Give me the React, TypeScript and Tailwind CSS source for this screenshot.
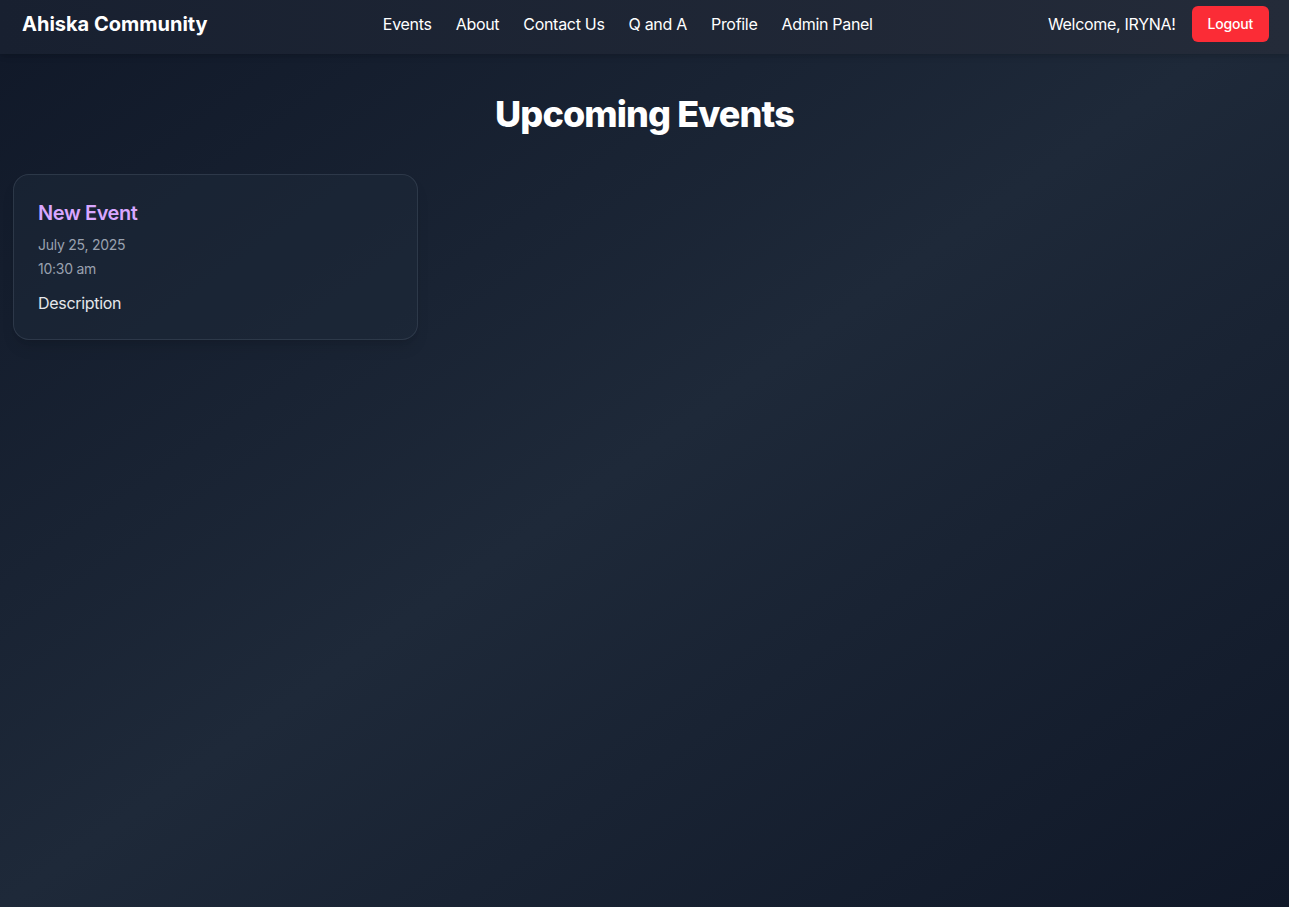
import React from "react";

export default function App() {
  const links = ["Events", "About", "Contact Us", "Q and A", "Profile", "Admin Panel"];
  return (
    <div
      className="min-h-screen w-full bg-linear-to-br from-[#101828] via-[#1e2939] to-[#101828] text-white"
      style={{ fontFamily: "Inter, 'Noto Sans', sans-serif" }}
    >
      <nav className="flex items-center justify-between bg-linear-to-r from-[#182030] to-[#242b39] px-5 pt-1.5 pb-3 shadow-md">
        <div className="text-xl font-bold pl-0.5">Ahiska Community</div>
        <div className="flex items-center gap-6 text-base tracking-[-0.3px] text-white">
          {links.map((l) => (
            <a key={l} className="cursor-pointer">
              {l}
            </a>
          ))}
        </div>
        <div className="flex items-center gap-4">
          <span className="text-base tracking-[-0.3px]">Welcome, IRYNA!</span>
          <button className="h-9 rounded-md bg-[#fb2c36] px-4 text-sm font-medium tracking-[-0.2px] text-white">
            Logout
          </button>
        </div>
      </nav>
      <main className="px-[13px] py-10">
        <h1 className="mb-10 text-center text-4xl font-extrabold tracking-[-0.9px]">Upcoming Events</h1>
        <div className="grid grid-cols-3 gap-6">
          <div className="rounded-2xl border border-gray-700/70 bg-[#1e2939]/50 p-6 shadow-lg">
            <h2 className="mb-2 text-xl font-semibold tracking-[-0.4px] text-[#d8a6ff]">New Event</h2>
            <p className="mb-1 text-sm tracking-[-0.25px] text-gray-400">July 25, 2025</p>
            <p className="text-sm tracking-[-0.25px] text-gray-400">10:30 am</p>
            <p className="mt-3 text-base tracking-[-0.3px] text-gray-200">Description</p>
          </div>
        </div>
      </main>
    </div>
  );
}
